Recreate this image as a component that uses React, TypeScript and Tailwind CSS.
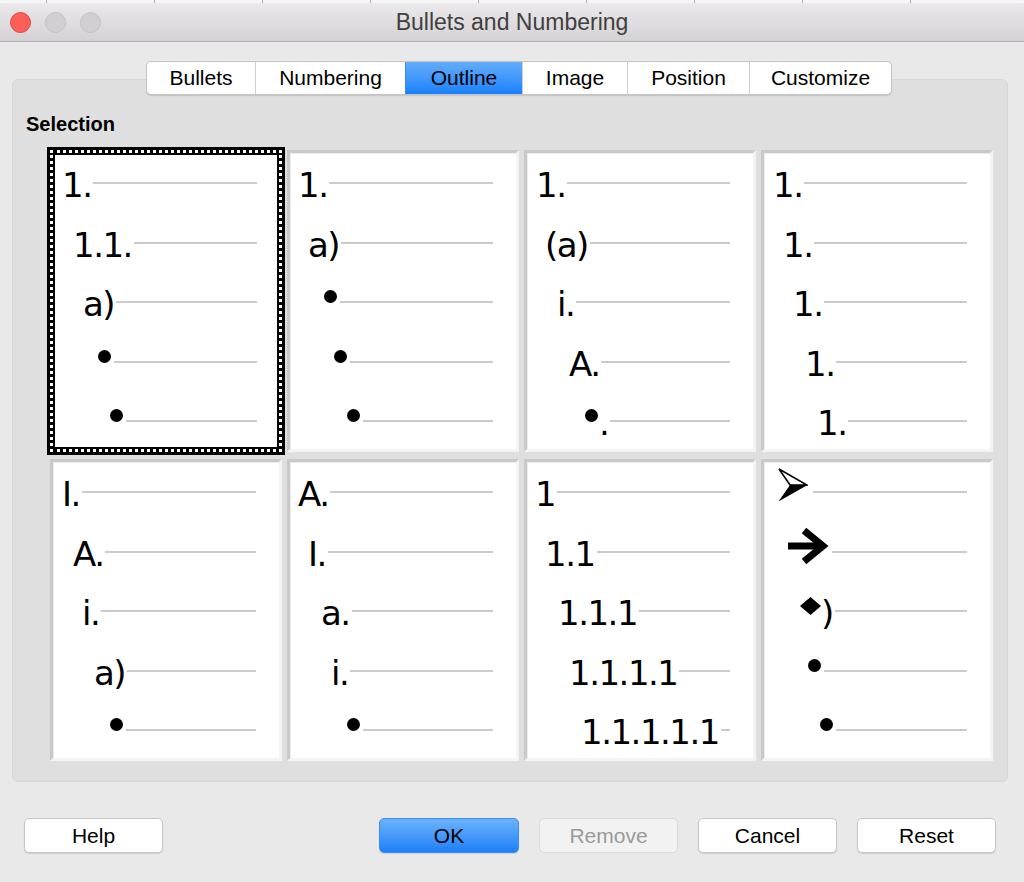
import type { ReactNode } from 'react';

type Row = [string, ReactNode];

const Dot = () => <span className="mt-[3px] mr-[1px] block h-[13px] w-[13px] shrink-0 rounded-full bg-black" />;

const T = (s: string) => <span className="whitespace-nowrap leading-[34px]">{s}</span>;

// three-d arrowhead bullet (top half outlined, bottom half filled)
const ArrowHead = () => (
  <svg viewBox="0 0 30 34" className="-mt-[9px] mr-[3px] h-[34px] w-[30px] shrink-0">
    <polygon points="1,1 29,17 12,17" fill="#fff" stroke="#000" strokeWidth="1.6" strokeLinejoin="miter" />
    <polygon points="12,17 29.5,17 0.5,33.5" fill="#000" />
  </svg>
);

const Arrow = () => (
  <svg viewBox="0 0 40 36" className="-mt-[9px] mr-[2px] h-[36px] w-[40px] shrink-0 overflow-visible">
    <rect x="0" y="14.5" width="34" height="7" fill="#000" />
    <polyline points="16,2.5 35,18 16,33.5" fill="none" stroke="#000" strokeWidth="7" strokeLinejoin="miter" />
  </svg>
);

const Diamond = () => (
  <svg viewBox="0 0 21 18" className="mt-[1px] h-[18px] w-[21px] shrink-0">
    <polygon points="10.5,0 21,9 10.5,18 0,9" fill="#000" />
  </svg>
);

const cells: Row[][] = [
  [['pl-[7px]', T('1.')], ['pl-[18px]', T('1.1.')], ['pl-[28px]', T('a)')], ['pl-[43px]', <Dot />], ['pl-[55px]', <Dot />]],
  [['pl-[8px]', T('1.')], ['pl-[18px]', T('a)')], ['pl-[34px]', <Dot />], ['pl-[44px]', <Dot />], ['pl-[57px]', <Dot />]],
  [
    ['pl-[9px]', T('1.')],
    ['pl-[18px]', T('(a)')],
    ['pl-[30px]', T('i.')],
    ['pl-[42px]', T('A.')],
    ['pl-[58px]', <><Dot />{T('.')}</>],
  ],
  [['pl-[9px]', T('1.')], ['pl-[19px]', T('1.')], ['pl-[29px]', T('1.')], ['pl-[41px]', T('1.')], ['pl-[53px]', T('1.')]],
  [['pl-[9px]', T('I.')], ['pl-[20px]', T('A.')], ['pl-[29px]', T('i.')], ['pl-[41px]', T('a)')], ['pl-[57px]', <Dot />]],
  [['pl-[8px]', T('A.')], ['pl-[18px]', T('I.')], ['pl-[31px]', T('a.')], ['pl-[41px]', T('i.')], ['pl-[57px]', <Dot />]],
  [
    ['pl-[8px]', T('1')],
    ['pl-[18px]', T('1.1')],
    ['pl-[31px]', T('1.1.1')],
    ['pl-[42px]', T('1.1.1.1')],
    ['pl-[54px]', T('1.1.1.1.1')],
  ],
  [
    ['pl-[14px]', <ArrowHead />],
    ['pl-[24px]', <Arrow />],
    ['pl-[36px]', <><Diamond />{T(')')}</>],
    ['pl-[44px]', <Dot />],
    ['pl-[56px]', <Dot />],
  ],
];

function Rows({ rows, selected }: { rows: Row[]; selected?: boolean }) {
  return (
    <div className={`flex flex-col gap-[24.5px] ${selected ? 'pt-[13px] pr-[20px]' : 'pt-[15px] pr-[23px]'}`}>
      {rows.map(([pl, node], i) => (
        <div key={i} className={`flex h-[35px] items-start ${pl}`}>
          {node}
          <div className="mt-[14px] ml-[2px] h-[2px] flex-1 bg-[#cbcbcb]" />
        </div>
      ))}
    </div>
  );
}

function Cell({ rows, selected }: { rows: Row[]; selected?: boolean }) {
  if (selected) {
    return (
      <div className="-m-[3px] border-[3px] border-black bg-black">
        <div className="h-full border-[3px] border-dotted border-white bg-black">
          <div className="h-full overflow-hidden border-2 border-black bg-white">
            <Rows rows={rows} selected />
          </div>
        </div>
      </div>
    );
  }
  return (
    <div className="overflow-hidden border-[3px] border-t-[#c9c9c9] border-l-[#c9c9c9] border-r-[#f4f4f4] border-b-[#f4f4f4] bg-white shadow-[inset_1px_1px_0_#ededed]">
      <Rows rows={rows} />
    </div>
  );
}

const tabs = [
  { label: 'Bullets', w: 'w-[108px]' },
  { label: 'Numbering', w: 'w-[150px]' },
  { label: 'Outline', w: 'w-[117px]', active: true },
  { label: 'Image', w: 'w-[105px]' },
  { label: 'Position', w: 'w-[122px]' },
  { label: 'Customize', w: 'w-[142px]' },
];

export default function App() {
  return (
    <div className="h-[882px] w-[1024px] overflow-hidden bg-[#e9e9e9] font-['Liberation_Sans',Arial,sans-serif] text-black">
      {/* window behind */}
      <div className="flex h-[3px] bg-[#f6f6f6] pl-[46px]">
        {Array.from({ length: 9 }).map((_, i) => (
          <div key={i} className="w-[108px] shrink-0 border-l border-[#b0b0b0]" />
        ))}
      </div>

      {/* title bar */}
      <div className="grid h-[39px] grid-cols-[1fr_auto_1fr] items-center rounded-t-[6px] border-b border-[#b4b2b4] bg-linear-to-b from-[#ebe9eb] to-[#d4d2d4]">
        <div className="flex items-center gap-[14px] pl-[10px]">
          <span className="block h-[21px] w-[21px] rounded-full border border-[#e0443e] bg-[#fc5f57]" />
          <span className="block h-[21px] w-[21px] rounded-full border border-[#c3c1c3] bg-[#d1cfd1]" />
          <span className="block h-[21px] w-[21px] rounded-full border border-[#c3c1c3] bg-[#d1cfd1]" />
        </div>
        <div className="text-[23px] leading-none text-[#404040]">Bullets and Numbering</div>
        <div />
      </div>

      {/* tabs */}
      <div className="relative z-10 mt-[19px] -mb-[16px] flex pl-[146px]">
        <div className="flex h-[34px] overflow-hidden rounded-[5px] border border-[#c4c4c4] bg-white shadow-[0_1px_1px_rgba(0,0,0,0.12)]">
          {tabs.map((t, i) => (
            <div
              key={t.label}
              className={`flex items-center justify-center text-[21px] ${t.w} ${i > 0 ? 'border-l border-[#cfcfcf]' : ''} ${
                t.active ? 'border-l-[#3b8cf2] bg-linear-to-b from-[#62adfb] to-[#1680fb]' : ''
              }`}
            >
              {t.label}
            </div>
          ))}
        </div>
      </div>

      {/* tab panel */}
      <div className="ml-[12px] h-[703px] w-[996px] rounded-[6px] border border-[#d6d6d6] bg-[#dfdfdf]">
        <div className="pt-[32px] pl-[13px] text-[20px] leading-[24px] font-bold">Selection</div>
        <div className="mt-[14px] ml-[37px] grid grid-cols-[repeat(4,232px)] grid-rows-[repeat(2,302px)] gap-x-[5px] gap-y-[7px] font-['DejaVu_Sans',Verdana,sans-serif] text-[34px] tracking-[-1.5px]">
          {cells.map((rows, i) => (
            <Cell key={i} rows={rows} selected={i === 0} />
          ))}
        </div>
      </div>

      {/* buttons */}
      <div className="mt-[36px] flex pr-[28px] pl-[24px] text-[21px]">
        <button className="h-[35px] w-[139px] rounded-[5px] border border-[#c6c6c6] bg-white shadow-[0_1px_1px_rgba(0,0,0,0.12)]">
          Help
        </button>
        <div className="flex-1" />
        <div className="flex gap-[20px]">
          <button className="h-[35px] w-[140px] rounded-[5px] border border-[#3a8ff0] bg-linear-to-b from-[#6ab2fb] to-[#1a80f8] shadow-[0_1px_1px_rgba(0,0,0,0.12)]">
            OK
          </button>
          <button className="h-[35px] w-[139px] rounded-[5px] border border-[#d9d9d9] bg-[#f2f2f2] text-[#9a9a9a]">
            Remove
          </button>
          <button className="h-[35px] w-[139px] rounded-[5px] border border-[#c6c6c6] bg-white shadow-[0_1px_1px_rgba(0,0,0,0.12)]">
            Cancel
          </button>
          <button className="h-[35px] w-[139px] rounded-[5px] border border-[#c6c6c6] bg-white shadow-[0_1px_1px_rgba(0,0,0,0.12)]">
            Reset
          </button>
        </div>
      </div>
    </div>
  );
}
